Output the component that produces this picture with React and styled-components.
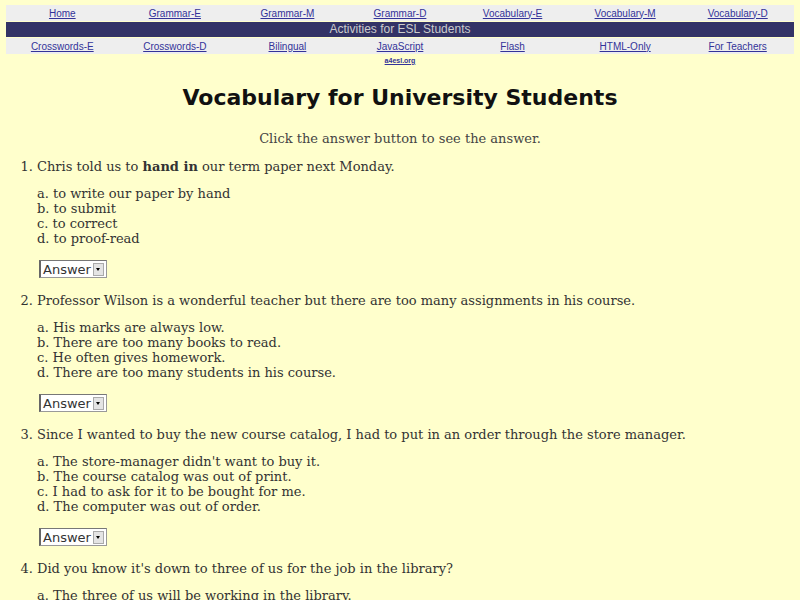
import React from "react";
import styled, { createGlobalStyle } from "styled-components";

const Global = createGlobalStyle`
  html, body {
    margin: 0;
    padding: 0;
    background: #ffffcc;
  }
  body {
    font-family: "DejaVu Serif", "Liberation Serif", serif;
    color: #333;
  }
`;

const Page = styled.div`
  padding: 5px 6px 0 6px;
`;

const Nav = styled.div`
  display: flex;
  flex-direction: column;
  gap: 1px;
`;

const NavRow = styled.div`
  display: grid;
  grid-template-columns: repeat(7, 1fr);
  background: #eeeeee;
  height: 16px;
  align-items: center;
`;

const NavCell = styled.div`
  text-align: center;
  font-family: "Liberation Sans", Arial, sans-serif;
  font-size: 10px;
  line-height: 12px;
  padding-top: 1px;
  position: relative;
`;

const NavLink = styled.a`
  color: #333399;
  text-decoration: underline;
`;

const Small = styled.a`
  position: absolute;
  left: 0;
  right: 0;
  top: 15px;
  font-size: 7px;
  font-weight: bold;
  color: #333399;
  text-decoration: underline;
`;

const Banner = styled.div`
  background: #333366;
  color: #cccccc;
  height: 15px;
  line-height: 15px;
  text-align: center;
  font-family: "Liberation Sans", Arial, sans-serif;
  font-size: 12px;
`;

const Title = styled.h1`
  margin: 28px 0 0 0;
  text-align: center;
  font-family: "Comic Sans MS", "DejaVu Sans", sans-serif;
  font-size: 22px;
  font-weight: bold;
  color: #111;
  line-height: 32px;
`;

const Lead = styled.p`
  margin: 17px 0 0 0;
  text-align: center;
  font-size: 13px;
  line-height: 15px;
  color: #444;
`;

const List = styled.ol`
  margin: 13px 0 0 0;
  padding-left: 31px;
  font-size: 13px;
  line-height: 15px;
`;

const Item = styled.li`
  margin-bottom: 15px;
  padding-left: 0;
`;

const Options = styled.div`
  margin-top: 12px;
`;

const Answer = styled.div`
  margin-top: 14px;
  display: inline-flex;
  align-items: center;
  gap: 2px;
  height: 18px;
  padding: 0 2px 0 2px;
  margin-left: 2px;
  background: #fff;
  border: 1px solid #999;
  border-left: 2px solid #666;
  border-top-color: #777;
  box-sizing: border-box;
  font-family: "DejaVu Sans", sans-serif;
  font-size: 13px;
  color: #333;
`;

const Arrow = styled.span`
  width: 9px;
  height: 11px;
  background: #e4e4e4;
  border: 1px solid #aaa;
  display: flex;
  align-items: center;
  justify-content: center;
  &:after {
    content: "";
    border-left: 2.5px solid transparent;
    border-right: 2.5px solid transparent;
    border-top: 3px solid #000;
  }
`;

const top = ["Home", "Grammar-E", "Grammar-M", "Grammar-D", "Vocabulary-E", "Vocabulary-M", "Vocabulary-D"];
const bottom = ["Crosswords-E", "Crosswords-D", "Bilingual", "JavaScript", "Flash", "HTML-Only", "For Teachers"];

const questions = [
  {
    text: (
      <>
        Chris told us to <b>hand in</b> our term paper next Monday.
      </>
    ),
    options: ["to write our paper by hand", "to submit", "to correct", "to proof-read"],
  },
  {
    text: "Professor Wilson is a wonderful teacher but there are too many assignments in his course.",
    options: [
      "His marks are always low.",
      "There are too many books to read.",
      "He often gives homework.",
      "There are too many students in his course.",
    ],
  },
  {
    text: "Since I wanted to buy the new course catalog, I had to put in an order through the store manager.",
    options: [
      "The store-manager didn't want to buy it.",
      "The course catalog was out of print.",
      "I had to ask for it to be bought for me.",
      "The computer was out of order.",
    ],
  },
  {
    text: "Did you know it's down to three of us for the job in the library?",
    options: [
      "The three of us will be working in the library.",
      "There are only three people left who might get the job.",
      "We three are going down to the library.",
      "The library is looking for three people.",
    ],
  },
];

export default function App() {
  return (
    <Page>
      <Global />
      <Nav>
        <NavRow>
          {top.map((t) => (
            <NavCell key={t}>
              <NavLink href="#">{t}</NavLink>
            </NavCell>
          ))}
        </NavRow>
        <Banner>Activities for ESL Students</Banner>
        <NavRow>
          {bottom.map((t) => (
            <NavCell key={t}>
              <NavLink href="#">{t}</NavLink>
              {t === "JavaScript" && <Small href="#">a4esl.org</Small>}
            </NavCell>
          ))}
        </NavRow>
      </Nav>
      <Title>Vocabulary for University Students</Title>
      <Lead>Click the answer button to see the answer.</Lead>
      <List>
        {questions.map((q, i) => (
          <Item key={i}>
            {q.text}
            <Options>
              {q.options.map((o, j) => (
                <div key={j}>
                  {"abcd"[j]}. {o}
                </div>
              ))}
            </Options>
            <Answer>
              Answer
              <Arrow />
            </Answer>
          </Item>
        ))}
      </List>
    </Page>
  );
}
